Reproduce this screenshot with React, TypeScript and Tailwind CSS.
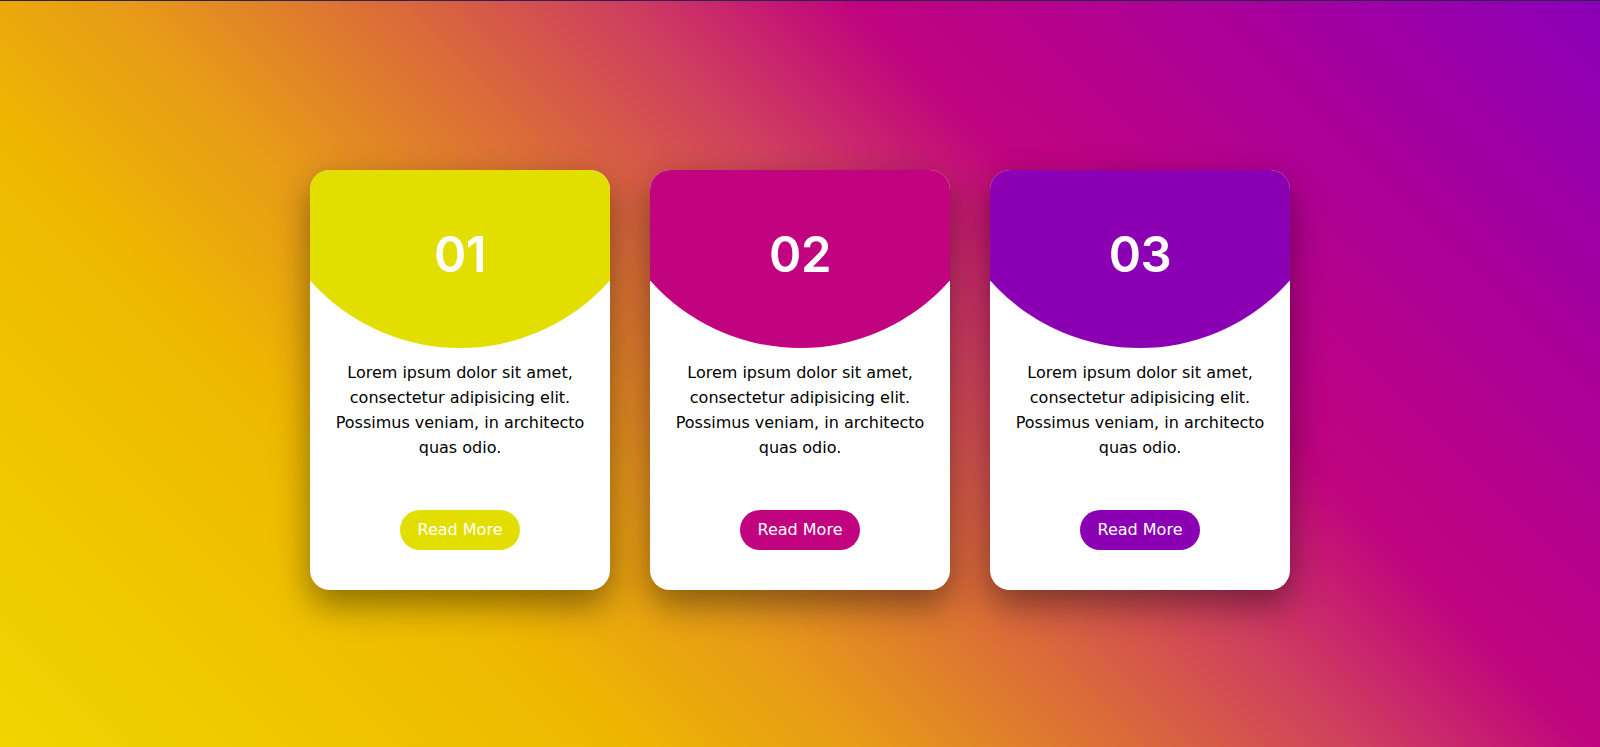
import React from "react";

const cards = [
  { num: "01", color: "bg-[#e2de00]" },
  { num: "02", color: "bg-[#c1037f]" },
  { num: "03", color: "bg-[#8c00b4]" },
];

function Card({ num, color }: { num: string; color: string }) {
  return (
    <div className="w-[300px] h-[420px] bg-white rounded-[20px] overflow-hidden shadow-[0_15px_35px_rgba(0,0,0,0.42)] flex flex-col items-center">
      <div
        className={`w-full h-[178px] ${color} [clip-path:circle(200px_at_50%_-22px)] flex justify-center pt-[54px]`}
      >
        <span
          className="text-[49px] leading-[62px] font-semibold text-white tracking-[-0.5px]"
          style={{ fontFamily: 'Inter, "Noto Sans", sans-serif' }}
        >
          {num}
        </span>
      </div>
      <p className="mt-[12px] text-[16px] leading-[25px] text-black text-center">
        Lorem ipsum dolor sit amet,
        <br />
        consectetur adipisicing elit.
        <br />
        Possimus veniam, in architecto
        <br />
        quas odio.
      </p>
      <button
        className={`mt-[50px] w-[120px] h-[40px] rounded-full ${color} text-white text-[16px] leading-none`}
      >
        Read More
      </button>
    </div>
  );
}

export default function App() {
  return (
    <div
      className="w-full h-[747px] border-t border-[#2a2450] flex justify-center gap-[40px] pt-[169px] bg-[linear-gradient(45deg,#f0d500_0%,#eeb800_26%,#e79a18_37%,#dc7035_47%,#cf3f5e_58%,#c0047f_68%,#a9009a_84%,#8a00b8_100%)]"
      style={{ fontFamily: '"DejaVu Sans", "Noto Sans", sans-serif' }}
    >
      {cards.map((c) => (
        <Card key={c.num} num={c.num} color={c.color} />
      ))}
    </div>
  );
}
